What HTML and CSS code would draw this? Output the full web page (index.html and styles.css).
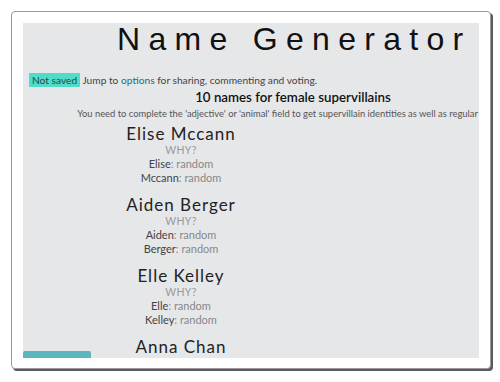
FILE: index.html
```html
<!DOCTYPE html>
<html lang="en">
<head>
  <meta charset="UTF-8">
  <meta name="viewport" content="width=device-width, initial-scale=1.0">
  <title>Name Generator</title>
  <link rel="stylesheet" href="styles.css">
</head>
<body>
  <div class="frame">
    <div class="panel">
      <div class="page">
        <h1 class="title">Name Generator</h1>

        <p class="status">
          <span class="badge">Not saved</span>
          Jump to <a href="#options" class="link">options</a> for sharing, commenting and voting.
        </p>

        <h2 class="list-title">10 names for female supervillains</h2>
        <p class="hint">You need to complete the 'adjective' or 'animal' field to get supervillain identities as well as regular names.</p>

        <div class="results">
          <div class="name-card">
            <div class="full-name">Elise Mccann</div>
            <div class="why">WHY?</div>
            <div class="part"><span class="word">Elise</span>: random</div>
            <div class="part"><span class="word">Mccann</span>: random</div>
          </div>

          <div class="name-card">
            <div class="full-name">Aiden Berger</div>
            <div class="why">WHY?</div>
            <div class="part"><span class="word">Aiden</span>: random</div>
            <div class="part"><span class="word">Berger</span>: random</div>
          </div>

          <div class="name-card">
            <div class="full-name">Elle Kelley</div>
            <div class="why">WHY?</div>
            <div class="part"><span class="word">Elle</span>: random</div>
            <div class="part"><span class="word">Kelley</span>: random</div>
          </div>

          <div class="name-card">
            <div class="full-name">Anna Chan</div>
            <div class="why">WHY?</div>
            <div class="part"><span class="word">Anna</span>: random</div>
            <div class="part"><span class="word">Chan</span>: random</div>
          </div>
        </div>
      </div>

      <!-- floating save button, only its top edge shows -->
      <div class="save-bar"></div>
    </div>
  </div>
</body>
</html>
```

FILE: styles.css
```css
/* Page and outer frame */
body {
  margin: 0;
  padding: 11px;
  background-color: #ffffff;
  font-family: Lato, 'Open Sans', sans-serif;
}

.frame {
  width: 456px;
  height: 335px;
  padding: 11px 11px 10px 11px;
  border: 1px solid #9a9a9a;
  border-radius: 4px;
  background-color: #ffffff;
  box-shadow: 2px 2px 0 #5a5a5a;
}

.panel {
  position: relative;
  height: 335px;
  background-color: #e6e7e9;
  overflow: hidden;
}

.page {
  width: 540px;
}

/* Header */
.title {
  box-sizing: border-box;
  width: 454px;
  margin: 0;
  padding-left: 94px;
  font-family: 'Liberation Sans', Arial, sans-serif;
  font-weight: normal;
  font-size: 32px;
  line-height: 32px;
  letter-spacing: 8.3px;
  white-space: nowrap;
  color: #111;
}

.status {
  margin: 18px 0 0 0;
  padding-left: 6px;
  font-size: 10.2px;
  line-height: 14px;
  color: #444;
}

.badge {
  background-color: #4fdcc8;
  color: #2a4a44;
  padding: 1px 3px;
}

.link {
  color: #1f6b7a;
  text-decoration: none;
}

.list-title {
  margin: 1px 0 0 0;
  font-size: 13.3px;
  font-weight: 600;
  line-height: 18px;
  text-align: center;
  color: #111;
}

.hint {
  margin: 1px 0 0 0;
  font-size: 9.4px;
  line-height: 14px;
  text-align: center;
  white-space: nowrap;
  color: #555;
}

/* Generated names */
.results {
  width: 316px;
  margin-top: 4px;
  text-align: center;
}

.name-card {
  margin-bottom: 11px;
}

.full-name {
  font-size: 17px;
  line-height: 18px;
  letter-spacing: 1px;
  color: #222;
}

.why {
  font-size: 10.5px;
  line-height: 14px;
  letter-spacing: 0.3px;
  color: #999;
}

.part {
  font-size: 11px;
  line-height: 14px;
  color: #888;
}

.word {
  color: #444;
}

.save-bar {
  position: absolute;
  left: 0;
  bottom: 0;
  width: 68px;
  height: 7px;
  background-color: #5bb6bd;
  border-radius: 2px 2px 0 0;
}
```
